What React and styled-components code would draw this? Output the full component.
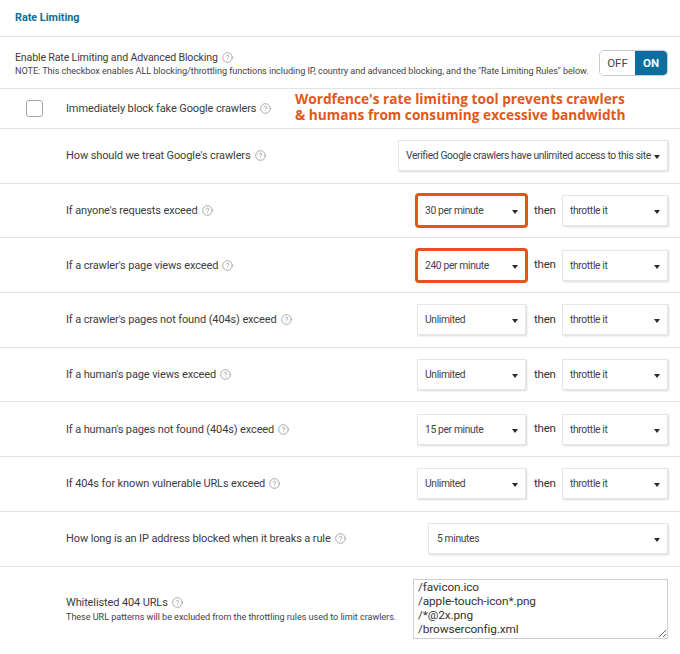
import React from "react";
import styled, { createGlobalStyle, css } from "styled-components";

const GlobalStyle = createGlobalStyle`
  html, body { margin: 0; padding: 0; background: #fff; }
  body { font-family: Roboto, "Liberation Sans", Arial, sans-serif; color: #3a3a3a; }
  * { box-sizing: border-box; }
`;

const Page = styled.div`
  width: 680px;
  background: #fff;
`;

const SectionHeader = styled.div`
  height: 37px;
  display: flex;
  align-items: center;
  padding: 0 0 2px 15px;
  border-bottom: 1px solid #e3e3e3;
`;

const Title = styled.h2`
  margin: 0;
  font-size: 10.8px;
  font-weight: 700;
  color: #0b6d9b;
`;

const MasterRow = styled.div`
  height: 52px;
  display: flex;
  align-items: center;
  justify-content: space-between;
  padding: 0 12px 0 15px;
  border-bottom: 1px solid #e3e3e3;
`;

const MasterText = styled.div`
  display: flex;
  flex-direction: column;
  align-items: flex-start;
  gap: 2px;
  padding-top: 1px;
`;

const Label = styled.span`
  justify-self: start;
  font-size: ${(p) => p.$size || 11}px;
  letter-spacing: ${(p) => p.$ls ?? -0.12}px;
  color: #3c3c3c;
  display: inline-flex;
  align-items: center;
  gap: 4px;
`;

const Note = styled.span`
  font-size: 9.1px;
  letter-spacing: -0.05px;
  color: #444;
`;

const Toggle = styled.div`
  display: flex;
  height: 26px;
  border: 1px solid #c9c9c9;
  border-radius: 5px;
  overflow: hidden;
`;

const ToggleHalf = styled.span`
  width: ${(p) => p.$w}px;
  display: flex;
  align-items: center;
  justify-content: center;
  font-size: 11.5px;
  ${(p) =>
    p.$active
      ? css`
          background: #0a6f9f;
          color: #fff;
          font-weight: 700;
        `
      : css`
          background: #fff;
          color: #444;
        `}
`;

const OptionRow = styled.div`
  position: relative;
  display: grid;
  grid-template-columns: 66px 1fr auto;
  align-items: center;
  min-height: ${(p) => p.$h}px;
  padding: ${(p) => p.$pad || 0}px 12px ${(p) => p.$pad || 0}px 0;
  border-bottom: ${(p) => (p.$last ? "none" : "1px solid #e3e3e3")};
`;

const CheckCell = styled.div`
  display: flex;
  justify-content: center;
  padding-left: 3px;
`;

const Checkbox = styled.span`
  width: 17px;
  height: 17px;
  border: 1px solid #a6a6a6;
  border-radius: 3px;
  background: #fff;
`;

const LabelBlock = styled.div`
  display: flex;
  flex-direction: column;
  align-items: flex-start;
  gap: 3px;
`;

const Controls = styled.div`
  display: flex;
  align-items: center;
  gap: 8px;
`;

const Then = styled.span`
  width: 20px;
  font-size: 11.5px;
  letter-spacing: -0.2px;
  color: #333;
  padding-bottom: 2px;
  white-space: nowrap;
`;

const Select = styled.div`
  position: relative;
  width: ${(p) => p.$w}px;
  height: 31px;
  display: flex;
  align-items: center;
  padding: 0 18px 0 ${(p) => p.$pl || 7}px;
  font-size: 10.3px;
  letter-spacing: -0.36px;
  color: #444;
  background: #fff;
  border: 1px solid #e6e6e6;
  box-shadow: 1px 1px 2px rgba(0, 0, 0, 0.15);
  white-space: nowrap;
  &::after {
    content: "";
    position: absolute;
    right: 7px;
    top: 14px;
    border-left: 3.5px solid transparent;
    border-right: 3.5px solid transparent;
    border-top: 4px solid #2a2a2a;
  }
  ${(p) =>
    p.$highlight &&
    css`
      outline: 3px solid #e8521b;
      outline-offset: -1px;
      border-radius: 2px;
      box-shadow: none;
    `}
`;

const TextArea = styled.textarea`
  width: 255px;
  height: 60px;
  margin: 0;
  padding: 0 4px;
  font-family: Roboto, "Liberation Sans", Arial, sans-serif;
  font-size: 11.8px;
  letter-spacing: -0.1px;
  line-height: 14px;
  color: #333;
  border: 1px solid #cfcfcf;
  border-radius: 0;
  overflow: hidden;
  resize: both;
`;

const Annotation = styled.div`
  position: absolute;
  left: 295px;
  top: 2px;
  font-family: "Open Sans", "Liberation Sans", sans-serif;
  font-weight: 700;
  font-size: 13.7px;
  line-height: 16px;
  color: #e2581c;
  white-space: nowrap;
`;

const HelpSvg = styled.svg`
  width: 11px;
  height: 11px;
  flex: none;
`;

const Help = () => (
  <HelpSvg viewBox="0 0 24 24" fill="none" stroke="#9a9a9a" strokeWidth="1.8" strokeLinecap="round" strokeLinejoin="round">
    <circle cx="12" cy="12" r="10.5" />
    <path d="M9.09 9a3 3 0 0 1 5.83 1c0 2-3 3-3 3" />
    <path d="M12 17h.01" />
  </HelpSvg>
);

const rateRows = [
  { label: "If anyone's requests exceed", value: "30 per minute", hl: true },
  { label: "If a crawler's page views exceed", value: "240 per minute", hl: true },
  { label: "If a crawler's pages not found (404s) exceed", value: "Unlimited" },
  { label: "If a human's page views exceed", value: "Unlimited" },
  { label: "If a human's pages not found (404s) exceed", value: "15 per minute" },
  { label: "If 404s for known vulnerable URLs exceed", value: "Unlimited" },
];

const ROW = 54.7;

export default function App() {
  return (
    <Page>
      <GlobalStyle />
      <SectionHeader>
        <Title>Rate Limiting</Title>
      </SectionHeader>

      <MasterRow>
        <MasterText>
          <Label $size={10.6} $ls={-0.15}>
            Enable Rate Limiting and Advanced Blocking <Help />
          </Label>
          <Note>
            NOTE: This checkbox enables ALL blocking/throttling functions including IP, country and advanced blocking, and the "Rate Limiting Rules" below.
          </Note>
        </MasterText>
        <Toggle>
          <ToggleHalf $w={35}>OFF</ToggleHalf>
          <ToggleHalf $w={32} $active>
            ON
          </ToggleHalf>
        </Toggle>
      </MasterRow>

      <OptionRow $h={40}>
        <CheckCell>
          <Checkbox />
        </CheckCell>
        <Label>
          Immediately block fake Google crawlers <Help />
        </Label>
        <Annotation>
          Wordfence's rate limiting tool prevents crawlers
          <br />
          &amp; humans from consuming excessive bandwidth
        </Annotation>
      </OptionRow>

      <OptionRow $h={ROW}>
        <span />
        <Label>
          How should we treat Google's crawlers <Help />
        </Label>
        <Select $w={270} $pl={7}>
          Verified Google crawlers have unlimited access to this site
        </Select>
      </OptionRow>

      {rateRows.map((r) => (
        <OptionRow $h={ROW} key={r.label}>
          <span />
          <Label>
            {r.label} <Help />
          </Label>
          <Controls>
            <Select $w={109} $highlight={r.hl}>
              {r.value}
            </Select>
            <Then>then</Then>
            <Select $w={106}>throttle it</Select>
          </Controls>
        </OptionRow>
      ))}

      <OptionRow $h={ROW}>
        <span />
        <Label>
          How long is an IP address blocked when it breaks a rule <Help />
        </Label>
        <Select $w={240} $pl={8}>
          5 minutes
        </Select>
      </OptionRow>

      <OptionRow $h={84} $pad={12} $last>
        <span />
        <LabelBlock>
          <Label>
            Whitelisted 404 URLs <Help />
          </Label>
          <Note>These URL patterns will be excluded from the throttling rules used to limit crawlers.</Note>
        </LabelBlock>
        <TextArea
          readOnly
          defaultValue={"/favicon.ico\n/apple-touch-icon*.png\n/*@2x.png\n/browserconfig.xml"}
        />
      </OptionRow>
    </Page>
  );
}
